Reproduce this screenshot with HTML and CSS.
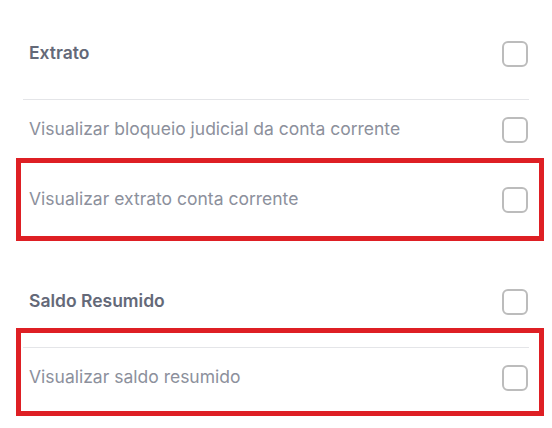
FILE: index.html
```html
<!DOCTYPE html>
<html lang="pt-BR">
<head>
<meta charset="utf-8">
<link rel="stylesheet" href="styles.css">
</head>
<body>
<div class="page">
  <section class="group">
    <div class="row header">
      <span class="label">Extrato</span>
      <span class="checkbox"></span>
    </div>
    <div class="list">
      <div class="row item">
        <span class="label">Visualizar bloqueio judicial da conta corrente</span>
        <span class="checkbox"></span>
      </div>
      <div class="row item">
        <span class="label">Visualizar extrato conta corrente</span>
        <span class="checkbox"></span>
      </div>
    </div>
  </section>
  <section class="group">
    <div class="row header">
      <span class="label">Saldo Resumido</span>
      <span class="checkbox"></span>
    </div>
    <div class="list">
      <div class="row item">
        <span class="label">Visualizar saldo resumido</span>
        <span class="checkbox"></span>
      </div>
    </div>
  </section>
  <div class="highlight highlight-1"></div>
  <div class="highlight highlight-2"></div>
</div>
</body>
</html>
```

FILE: styles.css
```css
html, body {
  margin: 0;
  padding: 0;
  background: #ffffff;
}
body {
  font-family: Inter, "Noto Sans", sans-serif;
}
.page {
  position: relative;
  width: 552px;
  height: 428px;
  padding: 24px 23px 0 23px;
  box-sizing: border-box;
  display: flex;
  flex-direction: column;
  gap: 42px;
}
.group {
  display: flex;
  flex-direction: column;
}
.row {
  height: 60px;
  display: flex;
  align-items: center;
  justify-content: space-between;
  padding: 0 1px 0 6px;
}
.header {
  margin-bottom: 15px;
}
.label {
  padding-bottom: 3px;
  line-height: 1.2;
}
.header .label {
  font-weight: 600;
  font-size: 17.5px;
  color: #646978;
}
.list {
  border-top: 1px solid #e4e5e8;
  display: flex;
  flex-direction: column;
  gap: 10px;
}
.item .label {
  font-size: 17.5px;
  color: #8c909c;
}
.checkbox {
  width: 26px;
  height: 26px;
  box-sizing: border-box;
  border: 2px solid #bcbcbc;
  border-radius: 6px;
  background: #fff;
}
.highlight {
  position: absolute;
  left: 16px;
  width: 528px;
  border: 5px solid #de1f24;
  box-sizing: border-box;
}
.highlight-1 {
  top: 158px;
  height: 83px;
}
.highlight-2 {
  top: 328px;
  height: 88px;
}
```
